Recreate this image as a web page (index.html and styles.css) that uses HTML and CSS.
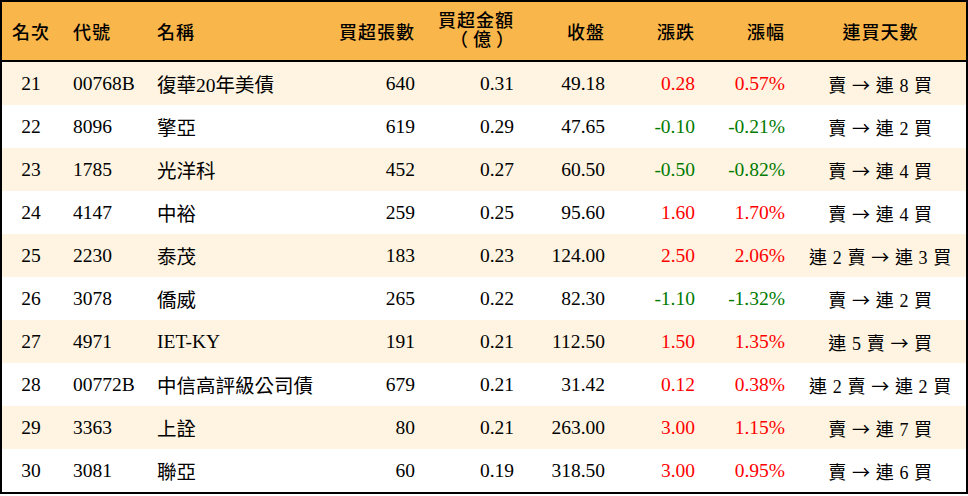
FILE: index.html
```html
<!DOCTYPE html>
<html lang="zh-Hant">
<head>
<meta charset="utf-8">
<title>買超排行</title>
<link rel="stylesheet" href="styles.css">
</head>
<body>
<table class="rank">
  <colgroup>
    <col class="c1"><col class="c2"><col class="c3"><col class="c4"><col class="c5"><col class="c6"><col class="c7"><col class="c8"><col class="c9">
  </colgroup>
  <thead>
    <tr>
      <th class="ctr">名次</th>
      <th class="lft code">代號</th>
      <th class="lft name">名稱</th>
      <th class="rgt">買超張數</th>
      <th class="rgt two"><span class="ln">買超金額</span><span class="ln fw">（億）</span></th>
      <th class="rgt">收盤</th>
      <th class="rgt">漲跌</th>
      <th class="rgt">漲幅</th>
      <th class="ctr">連買天數</th>
    </tr>
  </thead>
  <tbody>
    <tr class="alt"><td class="ctr">21</td><td class="lft code">00768B</td><td class="lft name">復華20年美債</td><td class="rgt">640</td><td class="rgt">0.31</td><td class="rgt">49.18</td><td class="rgt up">0.28</td><td class="rgt up">0.57%</td><td class="ctr days">賣 <span class="arr">→</span> 連 8 買</td></tr>
    <tr><td class="ctr">22</td><td class="lft code">8096</td><td class="lft name">擎亞</td><td class="rgt">619</td><td class="rgt">0.29</td><td class="rgt">47.65</td><td class="rgt down">-0.10</td><td class="rgt down">-0.21%</td><td class="ctr days">賣 <span class="arr">→</span> 連 2 買</td></tr>
    <tr class="alt"><td class="ctr">23</td><td class="lft code">1785</td><td class="lft name">光洋科</td><td class="rgt">452</td><td class="rgt">0.27</td><td class="rgt">60.50</td><td class="rgt down">-0.50</td><td class="rgt down">-0.82%</td><td class="ctr days">賣 <span class="arr">→</span> 連 4 買</td></tr>
    <tr><td class="ctr">24</td><td class="lft code">4147</td><td class="lft name">中裕</td><td class="rgt">259</td><td class="rgt">0.25</td><td class="rgt">95.60</td><td class="rgt up">1.60</td><td class="rgt up">1.70%</td><td class="ctr days">賣 <span class="arr">→</span> 連 4 買</td></tr>
    <tr class="alt"><td class="ctr">25</td><td class="lft code">2230</td><td class="lft name">泰茂</td><td class="rgt">183</td><td class="rgt">0.23</td><td class="rgt">124.00</td><td class="rgt up">2.50</td><td class="rgt up">2.06%</td><td class="ctr days">連 2 賣 <span class="arr">→</span> 連 3 買</td></tr>
    <tr><td class="ctr">26</td><td class="lft code">3078</td><td class="lft name">僑威</td><td class="rgt">265</td><td class="rgt">0.22</td><td class="rgt">82.30</td><td class="rgt down">-1.10</td><td class="rgt down">-1.32%</td><td class="ctr days">賣 <span class="arr">→</span> 連 2 買</td></tr>
    <tr class="alt"><td class="ctr">27</td><td class="lft code">4971</td><td class="lft name">IET-KY</td><td class="rgt">191</td><td class="rgt">0.21</td><td class="rgt">112.50</td><td class="rgt up">1.50</td><td class="rgt up">1.35%</td><td class="ctr days">連 5 賣 <span class="arr">→</span> 買</td></tr>
    <tr><td class="ctr">28</td><td class="lft code">00772B</td><td class="lft name">中信高評級公司債</td><td class="rgt">679</td><td class="rgt">0.21</td><td class="rgt">31.42</td><td class="rgt up">0.12</td><td class="rgt up">0.38%</td><td class="ctr days">連 2 賣 <span class="arr">→</span> 連 2 買</td></tr>
    <tr class="alt"><td class="ctr">29</td><td class="lft code">3363</td><td class="lft name">上詮</td><td class="rgt">80</td><td class="rgt">0.21</td><td class="rgt">263.00</td><td class="rgt up">3.00</td><td class="rgt up">1.15%</td><td class="ctr days">賣 <span class="arr">→</span> 連 7 買</td></tr>
    <tr><td class="ctr">30</td><td class="lft code">3081</td><td class="lft name">聯亞</td><td class="rgt">60</td><td class="rgt">0.19</td><td class="rgt">318.50</td><td class="rgt up">3.00</td><td class="rgt up">0.95%</td><td class="ctr days">賣 <span class="arr">→</span> 連 6 買</td></tr>
  </tbody>
</table>
</body>
</html>
```
FILE: styles.css
```css
html, body {
  margin: 0;
  padding: 0;
  background: #ffffff;
}

.rank {
  width: 968px;
  border-collapse: separate;
  border-spacing: 0;
  table-layout: fixed;
  border: 2px solid #000;
  font-family: "Liberation Serif", "Noto Sans CJK TC", serif;
  font-size: 19.5px;
  color: #000;
}

.c1 { width: 58px; }
.c2 { width: 85px; }
.c3 { width: 155px; }
.c4 { width: 125px; }
.c5 { width: 99px; }
.c6 { width: 91px; }
.c7 { width: 90px; }
.c8 { width: 90px; }
.c9 { width: 171px; }

.rank th {
  height: 60px;
  padding: 0;
  background: #f9b64a;
  border-bottom: 2px solid #000;
  font-weight: 500;
  font-size: 18px;
  letter-spacing: 1px;
  vertical-align: middle;
  box-sizing: border-box;
}

.ln {
  display: block;
  line-height: 19px;
  height: 19px;
  overflow: visible;
}

.fw {
  letter-spacing: 5px;
  margin-right: -5px;
}

.rank td {
  height: 43px;
  padding: 0;
  vertical-align: middle;
  box-sizing: border-box;
  white-space: nowrap;
}

.rank tr.alt td {
  background: #fef4e1;
}

.ctr { text-align: center; }
.lft { text-align: left; }
.rgt { text-align: right; padding-right: 10px !important; }
.code { padding-left: 13px !important; }
.name { padding-left: 12px !important; }

.up { color: #ff0000; }
.down { color: #007a00; }

.days {
  font-size: 18px;
  letter-spacing: 0.6px;
}

.arr {
  font-family: "Noto Sans CJK TC", sans-serif;
  font-size: 18px;
}
```
